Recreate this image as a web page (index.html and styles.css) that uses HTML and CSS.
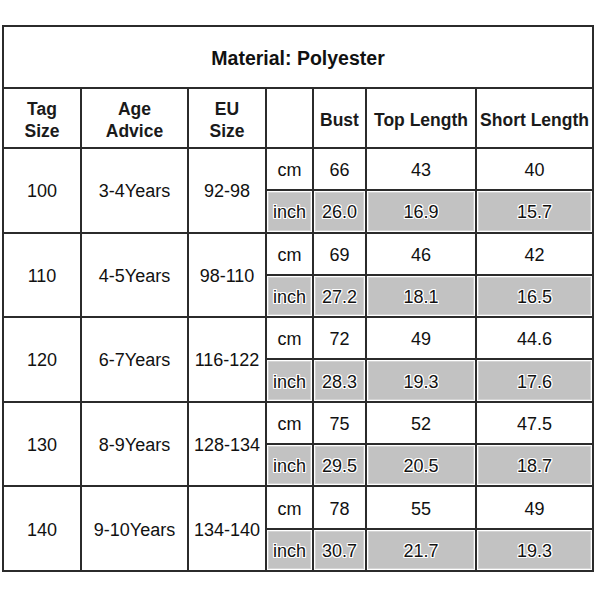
FILE: index.html
```html
<!DOCTYPE html>
<html>
<head>
<meta charset="utf-8">
<link rel="stylesheet" href="styles.css">
</head>
<body>
<table class="size-table">
  <colgroup>
    <col class="c-tag"><col class="c-age"><col class="c-eu"><col class="c-unit"><col class="c-bust"><col class="c-top"><col class="c-short">
  </colgroup>
  <tr class="title-row"><td colspan="7" class="title">Material: Polyester</td></tr>
  <tr class="head-row">
    <td class="head">Tag<br>Size</td>
    <td class="head">Age<br>Advice</td>
    <td class="head">EU<br>Size</td>
    <td class="head"></td>
    <td class="head">Bust</td>
    <td class="head">Top Length</td>
    <td class="head">Short Length</td>
  </tr>

  <tr class="cm-row"><td rowspan="2">100</td><td rowspan="2">3-4Years</td><td rowspan="2">92-98</td><td>cm</td><td>66</td><td>43</td><td>40</td></tr>
  <tr class="inch-row"><td class="inch">inch</td><td class="inch">26.0</td><td class="inch">16.9</td><td class="inch">15.7</td></tr>

  <tr class="cm-row"><td rowspan="2">110</td><td rowspan="2">4-5Years</td><td rowspan="2">98-110</td><td>cm</td><td>69</td><td>46</td><td>42</td></tr>
  <tr class="inch-row"><td class="inch">inch</td><td class="inch">27.2</td><td class="inch">18.1</td><td class="inch">16.5</td></tr>

  <tr class="cm-row"><td rowspan="2">120</td><td rowspan="2">6-7Years</td><td rowspan="2">116-122</td><td>cm</td><td>72</td><td>49</td><td>44.6</td></tr>
  <tr class="inch-row"><td class="inch">inch</td><td class="inch">28.3</td><td class="inch">19.3</td><td class="inch">17.6</td></tr>

  <tr class="cm-row"><td rowspan="2">130</td><td rowspan="2">8-9Years</td><td rowspan="2">128-134</td><td>cm</td><td>75</td><td>52</td><td>47.5</td></tr>
  <tr class="inch-row"><td class="inch">inch</td><td class="inch">29.5</td><td class="inch">20.5</td><td class="inch">18.7</td></tr>

  <tr class="cm-row"><td rowspan="2">140</td><td rowspan="2">9-10Years</td><td rowspan="2">134-140</td><td>cm</td><td>78</td><td>55</td><td>49</td></tr>
  <tr class="inch-row"><td class="inch">inch</td><td class="inch">30.7</td><td class="inch">21.7</td><td class="inch">19.3</td></tr>
</table>
</body>
</html>
```

FILE: styles.css
```css
html, body {
  margin: 0;
  padding: 0;
  background: #ffffff;
}

body {
  font-family: "Liberation Sans", Arial, sans-serif;
  color: #111111;
}

.size-table {
  margin: 25px 0 0 2px;
  width: 592px;
  table-layout: fixed;
  border-collapse: collapse;
}

.c-tag { width: 78px; }
.c-age { width: 107px; }
.c-eu { width: 78px; }
.c-unit { width: 47px; }
.c-bust { width: 53px; }
.c-top { width: 110px; }
.c-short { width: 117px; }

.size-table td {
  border: 2px solid #2b2b2b;
  padding: 3px 0 0 0;
  text-align: center;
  vertical-align: middle;
  font-size: 18px;
  white-space: nowrap;
  overflow: visible;
}

.title-row { height: 62px; }
.head-row { height: 60px; }
.cm-row, .inch-row { height: 42.3px; }

.size-table td.title {
  font-size: 19.5px;
  font-weight: bold;
  padding-top: 3px;
}

.size-table td.head {
  font-size: 17.5px;
  font-weight: bold;
  line-height: 22px;
  color: #1a1a1a;
  padding-top: 4px;
}

.size-table td.inch {
  background: #c2c2c2;
  box-shadow: inset 0 0 0 1px #ffffff, inset 0 0 0 2px #d4d4d4;
  color: #111111;
  text-shadow: 1px 0 0 #fff, -1px 0 0 #fff, 0 1px 0 #fff, 0 -1px 0 #fff, 1px 1px 0 #fff, -1px -1px 0 #fff, 1px -1px 0 #fff, -1px 1px 0 #fff;
}
```
